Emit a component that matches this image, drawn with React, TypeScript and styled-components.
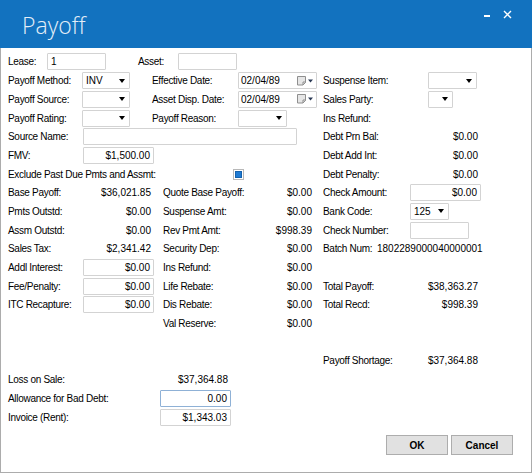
import React from "react";
import styled, { createGlobalStyle } from "styled-components";

const GlobalStyle = createGlobalStyle`
  body {
    margin: 0;
    background: #ffffff;
    font-family: "Liberation Sans", Arial, sans-serif;
    font-size: 10px;
    color: #000000;
  }
`;

const Window = styled.div`
  width: 532px;
  height: 473px;
  display: flex;
  flex-direction: column;
  box-sizing: border-box;
`;

const TitleBar = styled.div`
  height: 48px;
  flex: none;
  background-color: #1272bf;
  display: flex;
  justify-content: space-between;
  align-items: flex-start;
  padding-left: 22px;
`;

const Title = styled.div`
  padding-top: 14px;
  font-family: "Open Sans", "Liberation Sans", sans-serif;
  font-weight: 300;
  font-size: 23px;
  line-height: 1;
  color: #e4eef8;
`;

const WindowControls = styled.div`
  display: flex;
  align-items: center;
  gap: 13px;
  margin: 10px 20px 0 0;
  height: 8px;
`;

const MinimizeBtn = styled.span`
  width: 6px;
  height: 2px;
  background: #ffffff;
  margin-top: 4px;
`;

const Body = styled.div`
  flex: 1;
  border: 1px solid #acacac;
  border-top: none;
  padding: 4.6px 18px 0 7px;
  display: flex;
  flex-direction: column;
`;

const Row = styled.div`
  display: flex;
  align-items: center;
  height: 18.7px;
  flex: none;
`;

const Label = styled.span<{ $w: number }>`
  width: ${(p) => p.$w}px;
  flex: none;
  white-space: nowrap;
  letter-spacing: -0.3px;
`;

const Value = styled.span<{ $w: number }>`
  width: ${(p) => p.$w}px;
  flex: none;
  box-sizing: border-box;
  padding-right: 3px;
  text-align: right;
  white-space: nowrap;
`;

const Plain = styled.span`
  white-space: nowrap;
`;

const Slot = styled.div<{ $w: number }>`
  width: ${(p) => p.$w}px;
  flex: none;
  display: flex;
  align-items: center;
`;

const TextBox = styled.div<{ $w: number; $right?: boolean; $focus?: boolean }>`
  width: ${(p) => p.$w}px;
  height: 17px;
  flex: none;
  box-sizing: border-box;
  border: 1px solid ${(p) => (p.$focus ? "#8fb1d6" : "#d3d3d3")};
  border-radius: 1px;
  padding: 0 3px;
  line-height: 15px;
  text-align: ${(p) => (p.$right ? "right" : "left")};
  background: #ffffff;
  white-space: nowrap;
`;

const SelectBox = styled.div<{ $w: number }>`
  width: ${(p) => p.$w}px;
  height: 17px;
  flex: none;
  box-sizing: border-box;
  border: 1px solid #d3d3d3;
  border-radius: 1px;
  padding: 0 4px 0 3px;
  display: flex;
  align-items: center;
  justify-content: space-between;
  background: #ffffff;
`;

const Arrow = styled.span`
  margin-left: auto;
  width: 0;
  height: 0;
  border-left: 3.5px solid transparent;
  border-right: 3.5px solid transparent;
  border-top: 4px solid #000000;
`;

const DateField = styled.div`
  width: 79px;
  height: 17px;
  flex: none;
  box-sizing: border-box;
  border: 1px solid #d3d3d3;
  border-radius: 1px;
  padding: 0 3px 0 2px;
  display: flex;
  align-items: center;
  justify-content: space-between;
`;

const CheckBox = styled.div`
  width: 11px;
  height: 11px;
  box-sizing: border-box;
  border: 1px solid #b8b8b8;
  padding: 1px;
  background: #ffffff;
  margin-left: 1px;
`;

const CheckFill = styled.div`
  width: 100%;
  height: 100%;
  box-sizing: border-box;
  background: #1e7ad3;
  border: 1px solid #1562ad;
`;

const Gap = styled.div<{ $w: number }>`
  width: ${(p) => p.$w}px;
  flex: none;
`;

const ButtonRow = styled.div`
  display: flex;
  justify-content: flex-end;
  gap: 3px;
  margin-top: 9px;
`;

const Button = styled.button`
  width: 62px;
  height: 20px;
  border: 1px solid #adadad;
  background: #e1e1e1;
  font-family: "Liberation Sans", Arial, sans-serif;
  font-weight: bold;
  font-size: 10px;
  color: #000000;
  padding: 0;
`;

function Select({ w, text }: { w: number; text?: string }) {
  return (
    <SelectBox $w={w}>
      <span>{text}</span>
      <Arrow />
    </SelectBox>
  );
}

function DateBox({ text }: { text: string }) {
  return (
    <DateField>
      <span>{text}</span>
      <svg width="16" height="10" viewBox="0 0 16 10">
        <path d="M0.5 0.5h8v6l-2.5 2.5h-5.5z" fill="#e6e6e6" stroke="#8f8f8f" />
        <path d="M6 9v-3h3" fill="none" stroke="#8f8f8f" />
        <path d="M11 3.5h5l-2.5 3z" fill="#2b3a55" />
      </svg>
    </DateField>
  );
}

// three label / value columns used by the middle block of rows
function MoneyRow({
  a,
  b,
  c,
}: {
  a?: React.ReactNode;
  b?: React.ReactNode;
  c?: React.ReactNode;
}) {
  return (
    <Row>
      {a ?? <Gap $w={146} />}
      <Gap $w={9} />
      {b ?? <Gap $w={152} />}
      <Gap $w={8} />
      {c}
    </Row>
  );
}

export default function App() {
  return (
    <>
      <GlobalStyle />
      <Window>
        <TitleBar>
          <Title>Payoff</Title>
          <WindowControls>
            <MinimizeBtn />
            <svg width="9" height="9" viewBox="0 0 9 9">
              <path d="M1 1l7 7M8 1l-7 7" stroke="#ffffff" strokeWidth="1.4" />
            </svg>
          </WindowControls>
        </TitleBar>
        <Body>
          <Row>
            <Label $w={39}>Lease:</Label>
            <TextBox $w={59}>1</TextBox>
            <Gap $w={32} />
            <Label $w={40}>Asset:</Label>
            <TextBox $w={59} />
          </Row>
          <Row>
            <Label $w={74}>Payoff Method:</Label>
            <Slot $w={70}>
              <Select w={48} text="INV" />
            </Slot>
            <Label $w={86}>Effective Date:</Label>
            <Slot $w={85}>
              <DateBox text="02/04/89" />
            </Slot>
            <Label $w={105}>Suspense Item:</Label>
            <Select w={49} />
          </Row>
          <Row>
            <Label $w={74}>Payoff Source:</Label>
            <Slot $w={70}>
              <Select w={48} />
            </Slot>
            <Label $w={86}>Asset Disp. Date:</Label>
            <Slot $w={85}>
              <DateBox text="02/04/89" />
            </Slot>
            <Label $w={105}>Sales Party:</Label>
            <Select w={25} />
          </Row>
          <Row>
            <Label $w={74}>Payoff Rating:</Label>
            <Slot $w={70}>
              <Select w={48} />
            </Slot>
            <Label $w={86}>Payoff Reason:</Label>
            <Slot $w={85}>
              <Select w={49} />
            </Slot>
            <Label $w={105}>Ins Refund:</Label>
          </Row>
          <Row>
            <Label $w={75}>Source Name:</Label>
            <Slot $w={240}>
              <TextBox $w={214} />
            </Slot>
            <Label $w={87}>Debt Prn Bal:</Label>
            <Value $w={71}>$0.00</Value>
          </Row>
          <Row>
            <Label $w={75}>FMV:</Label>
            <Slot $w={240}>
              <TextBox $w={71} $right>
                $1,500.00
              </TextBox>
            </Slot>
            <Label $w={87}>Debt Add Int:</Label>
            <Value $w={71}>$0.00</Value>
          </Row>
          <Row>
            <Label $w={224}>Exclude Past Due Pmts and Assmt:</Label>
            <Slot $w={91}>
              <CheckBox>
                <CheckFill />
              </CheckBox>
            </Slot>
            <Label $w={87}>Debt Penalty:</Label>
            <Value $w={71}>$0.00</Value>
          </Row>

          <MoneyRow
            a={<><Label $w={75}>Base Payoff:</Label><Value $w={71}>$36,021.85</Value></>}
            b={<><Label $w={97}>Quote Base Payoff:</Label><Value $w={55}>$0.00</Value></>}
            c={<><Label $w={87}>Check Amount:</Label><TextBox $w={71} $right>$0.00</TextBox></>}
          />
          <MoneyRow
            a={<><Label $w={75}>Pmts Outstd:</Label><Value $w={71}>$0.00</Value></>}
            b={<><Label $w={97}>Suspense Amt:</Label><Value $w={55}>$0.00</Value></>}
            c={<><Label $w={87}>Bank Code:</Label><Select w={39} text="125" /></>}
          />
          <MoneyRow
            a={<><Label $w={75}>Assm Outstd:</Label><Value $w={71}>$0.00</Value></>}
            b={<><Label $w={97}>Rev Pmt Amt:</Label><Value $w={55}>$998.39</Value></>}
            c={<><Label $w={87}>Check Number:</Label><TextBox $w={59} /></>}
          />
          <MoneyRow
            a={<><Label $w={75}>Sales Tax:</Label><Value $w={71}>$2,341.42</Value></>}
            b={<><Label $w={97}>Security Dep:</Label><Value $w={55}>$0.00</Value></>}
            c={<><Label $w={54}>Batch Num:</Label><Plain>1802289000040000001</Plain></>}
          />
          <MoneyRow
            a={<><Label $w={75}>Addl Interest:</Label><TextBox $w={71} $right>$0.00</TextBox></>}
            b={<><Label $w={97}>Ins Refund:</Label><Value $w={55}>$0.00</Value></>}
          />
          <MoneyRow
            a={<><Label $w={75}>Fee/Penalty:</Label><TextBox $w={71} $right>$0.00</TextBox></>}
            b={<><Label $w={97}>Life Rebate:</Label><Value $w={55}>$0.00</Value></>}
            c={<><Label $w={87}>Total Payoff:</Label><Value $w={71}>$38,363.27</Value></>}
          />
          <MoneyRow
            a={<><Label $w={75}>ITC Recapture:</Label><TextBox $w={71} $right>$0.00</TextBox></>}
            b={<><Label $w={97}>Dis Rebate:</Label><Value $w={55}>$0.00</Value></>}
            c={<><Label $w={87}>Total Recd:</Label><Value $w={71}>$998.39</Value></>}
          />
          <MoneyRow b={<><Label $w={97}>Val Reserve:</Label><Value $w={55}>$0.00</Value></>} />
          <Row />
          <Row>
            <Gap $w={315} />
            <Label $w={87}>Payoff Shortage:</Label>
            <Value $w={71}>$37,364.88</Value>
          </Row>
          <Row>
            <Label $w={152}>Loss on Sale:</Label>
            <Value $w={71}>$37,364.88</Value>
          </Row>
          <Row>
            <Label $w={152}>Allowance for Bad Debt:</Label>
            <TextBox $w={71} $right $focus>
              0.00
            </TextBox>
          </Row>
          <Row>
            <Label $w={152}>Invoice (Rent):</Label>
            <TextBox $w={71} $right>
              $1,343.03
            </TextBox>
          </Row>

          <ButtonRow>
            <Button>OK</Button>
            <Button>Cancel</Button>
          </ButtonRow>
        </Body>
      </Window>
    </>
  );
}
